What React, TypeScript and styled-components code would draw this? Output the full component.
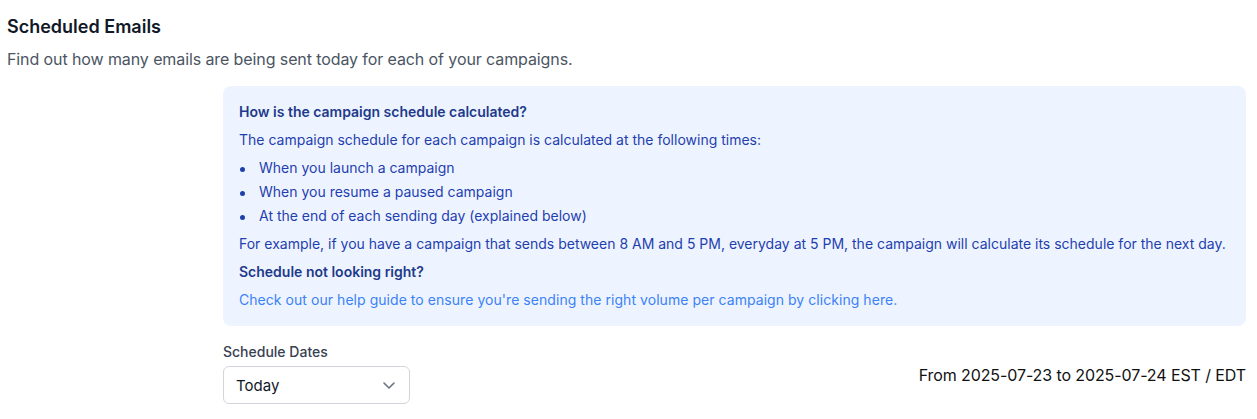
import React from "react";
import styled, { createGlobalStyle } from "styled-components";

const Global = createGlobalStyle`
  * { box-sizing: border-box; }
  body { margin: 0; font-family: Inter, "Noto Sans", sans-serif; background: #fff; color: #111827; }
`;

const Page = styled.div`
  padding: 15px 11px 0 7px;
`;

const Title = styled.h1`
  margin: 0;
  font-size: 18px;
  line-height: 24px;
  font-weight: 600;
  color: #111827;
`;

const Subtitle = styled.p`
  margin: 8px 0 0;
  font-size: 16px;
  line-height: 24px;
  letter-spacing: -0.1px;
  color: #4b5563;
`;

const Content = styled.div`
  margin: 15px 0 0 216px;
  display: flex;
  flex-direction: column;
`;

const InfoBox = styled.div`
  background: #eef4ff;
  border-radius: 8px;
  padding: 16px;
  color: #1e40af;
  font-size: 14px;
  line-height: 20px;
`;

const InfoHeading = styled.p<{ $first?: boolean }>`
  margin: ${(p) => (p.$first ? "0" : "8px 0 0")};
  font-weight: 600;
  color: #1e3a8a;
`;

const InfoText = styled.p`
  margin: 8px 0 0;
`;

const List = styled.ul`
  margin: 8px 0 0;
  padding: 0;
  display: flex;
  flex-direction: column;
  gap: 4px;
  list-style: none;
`;

const Item = styled.li`
  position: relative;
  padding-left: 20px;
  &::before {
    content: "";
    position: absolute;
    left: 1px;
    top: 9px;
    width: 5px;
    height: 5px;
    border-radius: 50%;
    background: #1e40af;
  }
`;

const Link = styled.a`
  display: block;
  margin-top: 8px;
  color: #3b82f6;
  text-decoration: none;
  letter-spacing: 0.05px;
`;

const Controls = styled.div`
  margin-top: 16px;
  display: flex;
  justify-content: space-between;
  align-items: center;
`;

const Field = styled.div`
  display: flex;
  flex-direction: column;
  gap: 4px;
`;

const Label = styled.label`
  font-size: 14px;
  line-height: 20px;
  font-weight: 500;
  color: #374151;
`;

const Select = styled.div`
  width: 187px;
  height: 38px;
  border: 1px solid #d1d5db;
  border-radius: 6px;
  display: flex;
  align-items: center;
  justify-content: space-between;
  padding: 0 10px 0 12px;
  font-size: 15px;
  color: #111827;
  background: #fff;
`;

const Range = styled.div`
  font-size: 16px;
  line-height: 24px;
  letter-spacing: -0.1px;
  color: #111;
  padding-top: 4px;
`;

export default function App() {
  return (
    <>
      <Global />
      <Page>
        <Title>Scheduled Emails</Title>
        <Subtitle>Find out how many emails are being sent today for each of your campaigns.</Subtitle>
        <Content>
          <InfoBox>
            <InfoHeading $first>How is the campaign schedule calculated?</InfoHeading>
            <InfoText>The campaign schedule for each campaign is calculated at the following times:</InfoText>
            <List>
              <Item>When you launch a campaign</Item>
              <Item>When you resume a paused campaign</Item>
              <Item>At the end of each sending day (explained below)</Item>
            </List>
            <InfoText>
              For example, if you have a campaign that sends between 8 AM and 5 PM, everyday at 5 PM, the campaign will calculate its schedule for the next day.
            </InfoText>
            <InfoHeading>Schedule not looking right?</InfoHeading>
            <Link href="#">Check out our help guide to ensure you're sending the right volume per campaign by clicking here.</Link>
          </InfoBox>
          <Controls>
            <Field>
              <Label>Schedule Dates</Label>
              <Select>
                <span>Today</span>
                <svg width="20" height="20" viewBox="0 0 20 20" fill="none" stroke="#6b7280" strokeWidth="1.6" strokeLinecap="round" strokeLinejoin="round">
                  <path d="M5 8l5 5 5-5" />
                </svg>
              </Select>
            </Field>
            <Range>From 2025-07-23 to 2025-07-24 EST / EDT</Range>
          </Controls>
        </Content>
      </Page>
    </>
  );
}
